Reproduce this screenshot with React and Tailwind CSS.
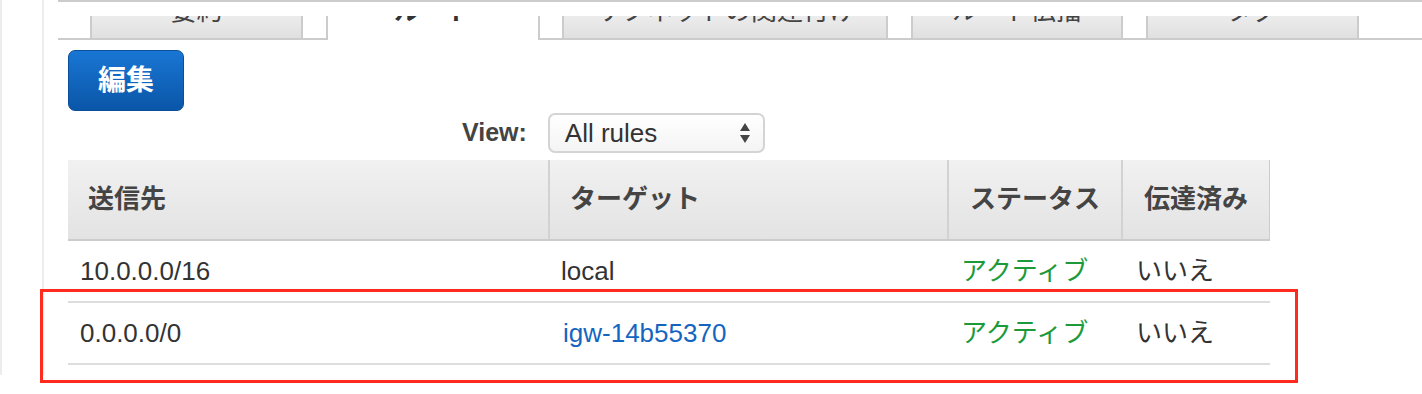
import React from 'react';

const font = "font-['Liberation_Sans','Noto_Sans_CJK_JP',sans-serif]";

function Tab({ label, width, active }) {
  if (active) {
    return (
      <div className={`${width} -mb-[2px] h-[24px] overflow-hidden border-x-2 border-[#cccccc] bg-white text-center`}>
        <span className="-mt-[17px] block text-[26px] font-bold leading-[24px] text-[#333]">{label}</span>
      </div>
    );
  }
  return (
    <div className={`${width} h-[22px] overflow-hidden border-x-2 border-[#cccccc] bg-gradient-to-b from-[#ececec] to-[#e0e0e0] text-center`}>
      <span className="-mt-[17px] block text-[26px] leading-[24px] text-[#444]">{label}</span>
    </div>
  );
}

function Row({ dest, target, link }) {
  return (
    <div className="grid h-[62px] grid-cols-[480px_399px_174px_149px] items-center border-b-2 border-[#dddddd] text-[26px] text-[#333]">
      <div className="pl-[12px]">{dest}</div>
      <div className={link ? 'pl-[15px] text-[#1565c0]' : 'pl-[13px]'}>{target}</div>
      <div className="pl-[14px] text-[#1c9a3a]">アクティブ</div>
      <div className="pl-[15px]">いいえ</div>
    </div>
  );
}

export default function App() {
  return (
    <div className={`relative flex h-[394px] w-[1422px] overflow-hidden bg-white ${font}`}>
      {/* page edge + sidebar divider */}
      <div className="h-[375px] w-[2px] bg-[#ececec]" />
      <div className="w-[40px]" />
      <div className="h-[375px] w-[2px] bg-[#ededed]" />

      <div className="ml-[14px] flex flex-1 flex-col">
        {/* tabs */}
        <div className="border-t-2 border-[#cccccc] pt-[14px]">
          <div className="flex items-end border-b-2 border-[#cccccc] pl-[32px]">
            <Tab label="要約" width="w-[213px]" />
            <div className="w-[23px]" />
            <Tab label="ルート" width="w-[214px]" active />
            <div className="w-[22px]" />
            <Tab label="サブネットの関連付け" width="w-[326px]" />
            <div className="w-[23px]" />
            <Tab label="ルート伝播" width="w-[212px]" />
            <div className="w-[23px]" />
            <Tab label="タグ" width="w-[213px]" />
          </div>
        </div>

        {/* edit button */}
        <button
          type="button"
          className="ml-[10px] mt-[10px] flex h-[61px] w-[116px] items-center justify-center rounded-[7px] border border-[#0b4f98] bg-gradient-to-b from-[#1976d4] to-[#0a56a8] text-[28px] font-bold text-white"
        >
          編集
        </button>

        {/* view filter */}
        <div className="ml-[404px] mt-[2px] flex items-center gap-[21px]">
          <span className="text-[25px] font-bold text-[#444]">View:</span>
          <div className="flex h-[40px] w-[217px] items-center justify-between rounded-[7px] border-2 border-[#d4d4d4] bg-gradient-to-b from-white to-[#f4f4f4] pl-[15px] pr-[12px]">
            <span className="text-[26px] text-[#333]">All rules</span>
            <svg width="12" height="22" viewBox="0 0 12 22">
              <path d="M6 1 L11 9 L1 9 Z" fill="#444" />
              <path d="M6 21 L11 13 L1 13 Z" fill="#444" />
            </svg>
          </div>
        </div>

        {/* routes table */}
        <div className="ml-[10px] mt-[7px] w-[1202px]">
          <div className="grid h-[81px] grid-cols-[480px_399px_174px_149px] border-b-2 border-r border-[#cccccc] bg-gradient-to-b from-[#f1f1f1] to-[#e3e3e3] text-[26px] font-bold text-[#444]">
            <div className="flex items-center pl-[20px]">送信先</div>
            <div className="flex items-center border-l-2 border-[#d2d2d2] pl-[20px]">ターゲット</div>
            <div className="flex items-center border-l-2 border-[#d2d2d2] pl-[21px]">ステータス</div>
            <div className="flex items-center border-l-2 border-[#d2d2d2] pl-[21px]">伝達済み</div>
          </div>
          <Row dest="10.0.0.0/16" target="local" />
          <Row dest="0.0.0.0/0" target="igw-14b55370" link />
        </div>
      </div>

      {/* highlight annotation */}
      <div className="pointer-events-none absolute left-[40px] top-[289px] h-[94px] w-[1258px] border-[3px] border-[#ff2b1e]" />
    </div>
  );
}
